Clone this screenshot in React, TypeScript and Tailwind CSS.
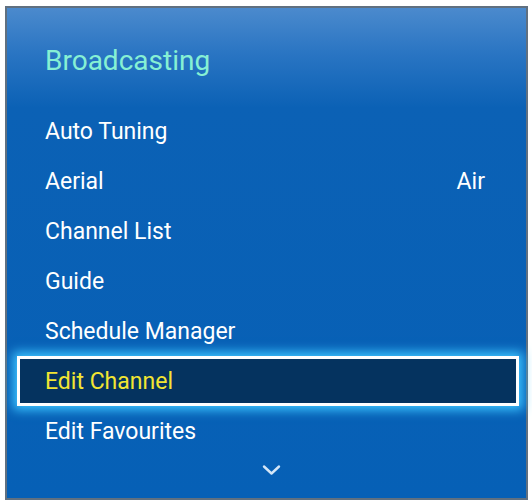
const items = [
  { label: 'Auto Tuning' },
  { label: 'Aerial', value: 'Air' },
  { label: 'Channel List' },
  { label: 'Guide' },
  { label: 'Schedule Manager' },
  { label: 'Edit Channel', active: true },
  { label: 'Edit Favourites' },
];

export default function App() {
  return (
    <div className="h-[503px] w-[532px] bg-white pl-[5px] pt-[6px]" style={{ fontFamily: 'Roboto, "Liberation Sans", sans-serif' }}>
      <div className="flex h-[494px] w-[523px] flex-col border-2 border-[#607080] bg-[linear-gradient(to_bottom,#4b8acd_0px,#2a75c3_45px,#0b61b5_100px,#0660b6_100%)]">
        {/* Header */}
        <div className="h-[98px] pl-[38px] pt-[38px]">
          <h1 className="text-[28px] leading-[30px] text-[#86f0d4]">Broadcasting</h1>
        </div>

        {/* Menu list */}
        <div className="flex flex-col">
          {items.map((item) =>
            item.active ? (
              <div key={item.label} className="ml-[10px] mr-[7px] flex h-[50px] items-center border-[3px] border-white bg-[#05335f] pl-[25px] shadow-[0_0_10px_4px_#3cc4ff]">
                <span className="text-[23px] leading-none text-[#f2e532]">{item.label}</span>
              </div>
            ) : (
              <div key={item.label} className="flex h-[50px] items-center justify-between pl-[38px] pr-[41px]">
                <span className="text-[23px] leading-none text-white">{item.label}</span>
                {item.value && <span className="text-[23px] leading-none text-white">{item.value}</span>}
              </div>
            )
          )}
        </div>

        {/* More indicator */}
        <div className="flex justify-center pl-[10px] pt-[8px]">
          <svg width="19" height="12" viewBox="0 0 19 12" fill="none">
            <path d="M2 2.5l7.5 7 7.5-7" stroke="#d4e6f7" strokeWidth="2.4" strokeLinecap="round" strokeLinejoin="round" />
          </svg>
        </div>
      </div>
    </div>
  );
}
